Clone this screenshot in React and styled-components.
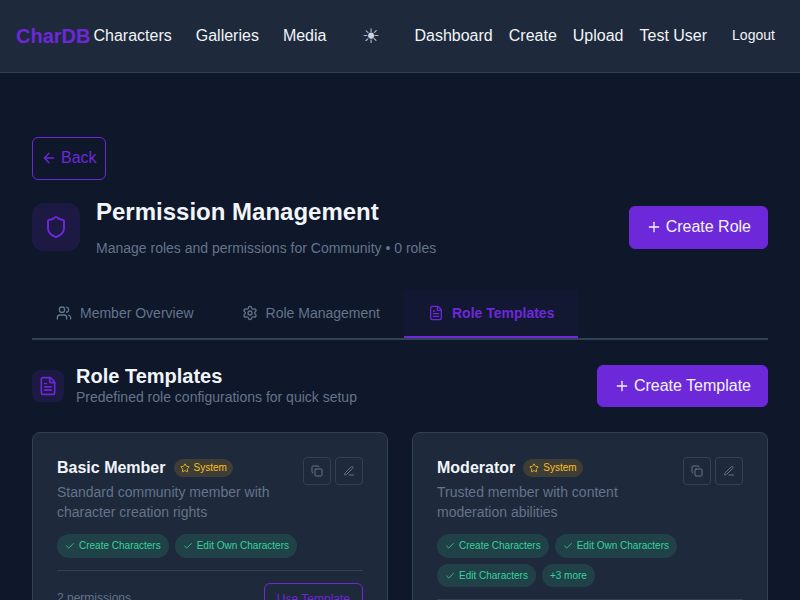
import React from "react";
import styled, { createGlobalStyle, css } from "styled-components";
import {
  ArrowLeft,
  Shield,
  Plus,
  Users,
  Settings,
  FileText,
  Star,
  Copy,
  Check,
} from "lucide-react";

const c = {
  bg: "#0f172a",
  surface: "#1e293b",
  border: "#334155",
  primary: "#6d28d9",
  text: "#f1f5f9",
  muted: "#64748b",
  success: "#34d399",
  warning: "#fbbf24",
};

const GlobalStyle = createGlobalStyle`
  *, *::before, *::after { box-sizing: border-box; margin: 0; padding: 0; }
  html, body { height: 100%; overflow: hidden; }
  body {
    background: ${c.bg};
    color: ${c.text};
    font-family: "Liberation Sans", Arial, sans-serif;
    font-size: 16px;
    line-height: 24px;
  }
  button { font-family: inherit; }
  svg { flex-shrink: 0; }
`;

const Page = styled.div`
  height: 600px;
  overflow: hidden;
`;

const Header = styled.header`
  height: 73px;
  padding: 0 16px;
  display: flex;
  align-items: center;
  background: ${c.surface};
  border-bottom: 1px solid ${c.border};
  white-space: nowrap;
`;

const Logo = styled.a`
  width: 77.5px;
  color: ${c.primary};
  font-size: 20px;
  font-weight: 700;
`;

const Nav = styled.nav`
  display: flex;
  gap: 24px;
`;

const NavLink = styled.a`
  color: ${c.text};
`;

const ThemeToggle = styled.button`
  width: 40px;
  height: 40px;
  margin: 0 24px;
  padding-left: 2px;
  border: 0;
  background: none;
  color: #cbd5e1;
  font-size: 20px;
`;

const UserNav = styled.div`
  display: flex;
  align-items: center;
  gap: 16px;
`;

const Logout = styled.button`
  padding: 8px 8px 10px;
  border: 1px solid transparent;
  background: none;
  color: ${c.text};
  font-size: 14px;
`;

const Main = styled.main`
  padding: 64px 32px 0;
`;

const Button = styled.button`
  display: inline-flex;
  align-items: center;
  justify-content: center;
  gap: 4px;
  height: ${(p) => p.$height || 43}px;
  padding: 0 ${(p) => p.$padX || 16}px;
  border: 1px solid ${c.primary};
  border-radius: 6px;
  background: ${(p) => (p.$outline ? "transparent" : c.primary)};
  color: ${(p) => (p.$outline ? c.primary : c.text)};
  font-size: ${(p) => p.$size || 16}px;
  line-height: 24px;
  white-space: nowrap;
`;

const BackButton = styled(Button)`
  display: flex;
  padding-bottom: 2px;
  svg { margin-top: 1px; }
`;

const PageHead = styled.div`
  display: flex;
  align-items: center;
  justify-content: space-between;
  height: 64px;
  margin-top: 15px;
`;

const HeadGroup = styled.div`
  display: flex;
  align-items: center;
  gap: ${(p) => p.$gap}px;
`;

const IconTile = styled.div`
  display: flex;
  align-items: center;
  justify-content: center;
  width: ${(p) => p.$size}px;
  height: ${(p) => p.$size}px;
  border-radius: ${(p) => p.$radius}px;
  background: rgba(109, 40, 217, 0.15);
  color: ${c.primary};
`;

const Title = styled.h1`
  font-size: 24px;
  line-height: 36px;
  font-weight: 700;
`;

const Subtitle = styled.p`
  margin-top: ${(p) => p.$top || 0}px;
  margin-bottom: ${(p) => p.$bottom || 0}px;
  color: ${c.muted};
  font-size: 14px;
  line-height: 21px;
`;

const Tabs = styled.div`
  display: flex;
  height: 50px;
  margin-top: 31px;
  border-bottom: 2px solid ${c.border};
`;

const Tab = styled.button`
  display: flex;
  align-items: center;
  gap: 8px;
  height: 48px;
  padding: 0 24px;
  border: 0;
  border-bottom: 2px solid transparent;
  background: none;
  color: ${c.muted};
  font-size: 14px;
  ${(p) =>
    p.$active &&
    css`
      color: ${c.primary};
      font-weight: 700;
      border-bottom-color: ${c.primary};
      background: rgba(109, 40, 217, 0.04);
    `}
`;

const SectionHead = styled.div`
  display: flex;
  align-items: center;
  justify-content: space-between;
  height: 42px;
  margin: 25px 0;
`;

const SectionTitle = styled.h2`
  font-size: 20px;
  line-height: 22px;
  font-weight: 700;
`;

const Grid = styled.div`
  display: grid;
  grid-template-columns: 1fr 1fr;
  gap: 24px;
`;

const Card = styled.article`
  height: 260px;
  padding: 24px;
  border: 1px solid ${c.border};
  border-radius: 8px;
  background: ${c.surface};
`;

const CardHead = styled.div`
  display: flex;
  justify-content: space-between;
  align-items: flex-start;
`;

const CardInfo = styled.div`
  width: 230px;
`;

const CardTitle = styled.h3`
  display: flex;
  align-items: center;
  gap: 8px;
  height: 21px;
  font-size: 16px;
  font-weight: 700;
  white-space: nowrap;
`;

const SystemBadge = styled.span`
  display: inline-flex;
  align-items: center;
  gap: 4px;
  height: 18px;
  padding: 0 6px;
  border-radius: 9px;
  background: rgba(251, 191, 36, 0.15);
  color: ${c.warning};
  font-size: 10px;
  font-weight: 400;
`;

const Description = styled.p`
  margin-top: 4px;
  color: ${c.muted};
  font-size: 14px;
  line-height: 20px;
`;

const Actions = styled.div`
  display: flex;
  gap: 4px;
`;

const IconButton = styled.button`
  display: flex;
  align-items: center;
  justify-content: center;
  width: 28px;
  height: 28px;
  border: 1px solid ${c.border};
  border-radius: 4px;
  background: none;
  color: ${c.muted};
`;

const Chips = styled.div`
  display: flex;
  flex-wrap: wrap;
  gap: 6px;
  margin: 12px 0;
`;

const Chip = styled.span`
  display: inline-flex;
  align-items: center;
  gap: 4px;
  height: ${(p) => p.$height || 24}px;
  padding: 0 8px;
  border-radius: 12px;
  background: rgba(52, 211, 153, 0.15);
  color: ${c.success};
  font-size: 10px;
  white-space: nowrap;
`;

const CardFoot = styled.div`
  display: flex;
  align-items: center;
  justify-content: space-between;
  padding-top: 12px;
  border-top: 1px solid ${c.border};
`;

const Count = styled.span`
  margin-bottom: 2px;
  color: ${c.muted};
  font-size: 12px;
`;

const EditIcon = ({ size }) => (
  <svg
    width={size}
    height={size}
    viewBox="0 0 24 24"
    fill="none"
    stroke="currentColor"
    strokeWidth="2"
    strokeLinecap="round"
    strokeLinejoin="round"
  >
    <path d="M12 20h9" />
    <path d="M16.376 3.622a1 1 0 0 1 3.002 3.002L7.368 18.635a2 2 0 0 1-.855.506l-2.872.838a.5.5 0 0 1-.62-.62l.838-2.872a2 2 0 0 1 .506-.854z" />
  </svg>
);

const TEMPLATES = [
  {
    name: "Basic Member",
    description: "Standard community member with character creation rights",
    permissions: ["Create Characters", "Edit Own Characters"],
    count: 2,
  },
  {
    name: "Moderator",
    description: "Trusted member with content moderation abilities",
    permissions: ["Create Characters", "Edit Own Characters", "Edit Characters"],
    more: 3,
    count: 6,
  },
];

const TemplateCard = ({ name, description, permissions, more, count }) => (
  <Card>
    <CardHead>
      <CardInfo>
        <CardTitle>
          {name}
          <SystemBadge>
            <Star size={10} />
            System
          </SystemBadge>
        </CardTitle>
        <Description>{description}</Description>
      </CardInfo>
      <Actions>
        <IconButton aria-label="Duplicate">
          <Copy size={12} />
        </IconButton>
        <IconButton aria-label="Edit">
          <EditIcon size={12} />
        </IconButton>
      </Actions>
    </CardHead>
    <Chips>
      {permissions.map((p, i) => (
        <Chip key={p} $height={i > 1 ? 23 : 24}>
          <Check size={10} />
          {p}
        </Chip>
      ))}
      {more && <Chip $height={23}>+{more} more</Chip>}
    </Chips>
    <CardFoot>
      <Count>{count} permissions</Count>
      <Button $outline $padX={12} $height={32} $size={12}>
        Use Template
      </Button>
    </CardFoot>
  </Card>
);

export default function App() {
  return (
    <Page>
      <GlobalStyle />
      <Header>
        <Logo>CharDB</Logo>
        <Nav>
          <NavLink>Characters</NavLink>
          <NavLink>Galleries</NavLink>
          <NavLink>Media</NavLink>
        </Nav>
        <ThemeToggle aria-label="Toggle theme">☀</ThemeToggle>
        <UserNav>
          <NavLink>Dashboard</NavLink>
          <NavLink>Create</NavLink>
          <NavLink>Upload</NavLink>
          <NavLink>Test User</NavLink>
          <Logout>Logout</Logout>
        </UserNav>
      </Header>
      <Main>
        <BackButton $outline $padX={8}>
          <ArrowLeft size={16} />
          Back
        </BackButton>
        <PageHead>
          <HeadGroup $gap={16}>
            <IconTile $size={48} $radius={12}>
              <Shield size={24} />
            </IconTile>
            <div>
              <Title>Permission Management</Title>
              <Subtitle $top={8} $bottom={2}>
                Manage roles and permissions for Community • 0 roles
              </Subtitle>
            </div>
          </HeadGroup>
          <Button>
            <Plus size={16} />
            Create Role
          </Button>
        </PageHead>
        <Tabs>
          <Tab>
            <Users size={16} />
            Member Overview
          </Tab>
          <Tab>
            <Settings size={16} />
            Role Management
          </Tab>
          <Tab $active>
            <FileText size={16} />
            Role Templates
          </Tab>
        </Tabs>
        <SectionHead>
          <HeadGroup $gap={12}>
            <IconTile $size={32} $radius={8}>
              <FileText size={20} />
            </IconTile>
            <div>
              <SectionTitle>Role Templates</SectionTitle>
              <Subtitle>Predefined role configurations for quick setup</Subtitle>
            </div>
          </HeadGroup>
          <Button $height={42}>
            <Plus size={16} />
            Create Template
          </Button>
        </SectionHead>
        <Grid>
          {TEMPLATES.map((t) => (
            <TemplateCard key={t.name} {...t} />
          ))}
        </Grid>
      </Main>
    </Page>
  );
}
